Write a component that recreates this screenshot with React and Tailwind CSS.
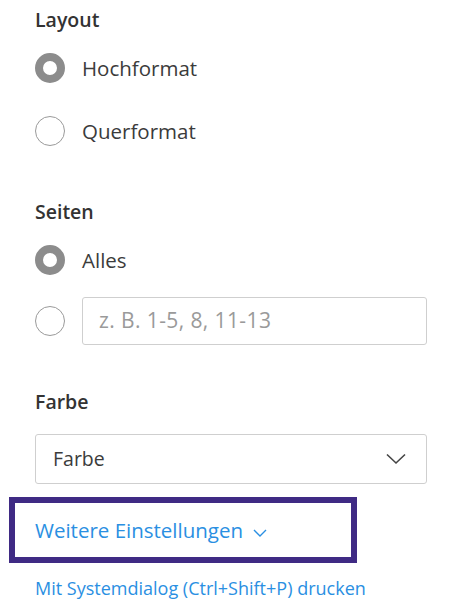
import React from 'react';

const Radio = ({ checked }) =>
  checked ? (
    <span className="block w-[30px] h-[30px] rounded-full border-[8px] border-[#8c8c8c] bg-white shrink-0" />
  ) : (
    <span className="block w-[30px] h-[30px] rounded-full border-[1.5px] border-[#9a9a9a] bg-white shrink-0" />
  );

const Option = ({ checked, label, className = '' }) => (
  <div className={`flex items-center h-[30px] ${className}`}>
    <Radio checked={checked} />
    <span className="ml-[17px] text-[20.5px] text-[#3b3b3b]">{label}</span>
  </div>
);

const Heading = ({ children, className = '' }) => (
  <h2 className={`h-[28px] leading-[28px] text-[19.5px] font-semibold text-[#333] ${className}`}>{children}</h2>
);

const App = () => {
  return (
    <div className="w-[456px] h-[613px] bg-white pl-[35px] pt-[6px] font-['Segoe_UI','Open_Sans',sans-serif] overflow-hidden">
      <Heading>Layout</Heading>
      <Option checked label="Hochformat" className="mt-[19px]" />
      <Option label="Querformat" className="mt-[33px]" />

      <Heading className="mt-[52px]">Seiten</Heading>
      <Option checked label="Alles" className="mt-[19px]" />
      <div className="flex items-center mt-[22px]">
        <Radio />
        <div className="ml-[17px] w-[345px] h-[48px] border border-[#cfcfcf] rounded-[3px] flex items-center px-[16px] text-[21px] tracking-[0.4px] text-[#9a9a9a]">
          z. B. 1-5, 8, 11-13
        </div>
      </div>

      <Heading className="mt-[43px]">Farbe</Heading>
      <div className="mt-[18px] w-[392px] h-[50px] border border-[#cfcfcf] rounded-[3px] flex items-center justify-between pl-[17px] pr-[20px] text-[19.5px] text-[#3b3b3b]">
        <span>Farbe</span>
        <svg width="20" height="12" viewBox="0 0 20 12" fill="none" stroke="#444" strokeWidth="1.6">
          <path d="M1 1.5 L10 10 L19 1.5" />
        </svg>
      </div>

      <div className="mt-[13px] -ml-[26px] w-[348px] h-[66px] border-[6px] border-[#3f2a84] flex items-center pl-[20px] text-[#2a8fe2] text-[20.5px]">
        <span>Weitere Einstellungen</span>
        <svg className="ml-[10px] mt-[6px]" width="14" height="8" viewBox="0 0 14 8" fill="none" stroke="#2a8fe2" strokeWidth="1.4">
          <path d="M1 1 L7 7 L13 1" />
        </svg>
      </div>

      <p className="mt-[13px] h-[24px] leading-[24px] text-[18px] text-[#2a8fe2]">Mit Systemdialog (Ctrl+Shift+P) drucken</p>
    </div>
  );
};

export default App;
